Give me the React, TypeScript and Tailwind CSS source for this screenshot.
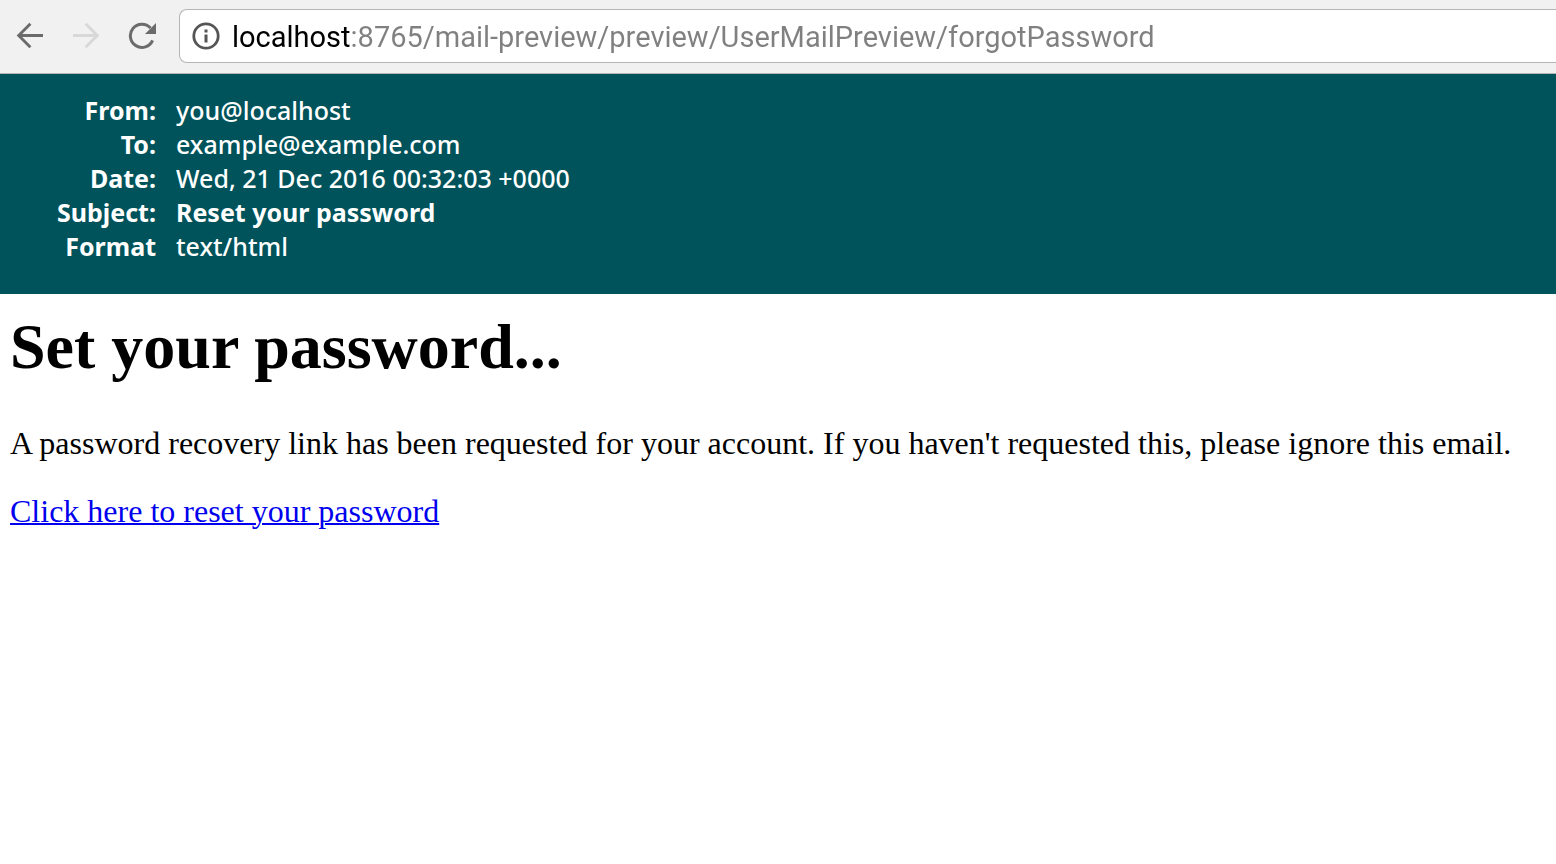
const headers = [
  { label: "From:", value: "you@localhost" },
  { label: "To:", value: "example@example.com" },
  { label: "Date:", value: "Wed, 21 Dec 2016 00:32:03 +0000" },
  { label: "Subject:", value: "Reset your password", strong: true },
  { label: "Format", value: "text/html" },
];

function BackIcon() {
  return (
    <svg className="size-7" viewBox="0 0 28 28" fill="none" stroke="currentColor" strokeWidth="2.9" aria-hidden="true">
      <path d="M27 13.5H3M14.4 1.7L2.7 13.5L14.4 25.3" />
    </svg>
  );
}

function ForwardIcon() {
  return (
    <svg className="size-7" viewBox="0 0 28 28" fill="none" stroke="currentColor" strokeWidth="2.9" aria-hidden="true">
      <path d="M1 13.5H25M13.6 1.7L25.3 13.5L13.6 25.3" />
    </svg>
  );
}

function ReloadIcon() {
  return (
    <svg className="size-7" viewBox="0 0 28 28" fill="none" aria-hidden="true">
      <path d="M22.5 5.9A11.6 11.6 0 1 0 24.6 18.4" stroke="currentColor" strokeWidth="3" />
      <path d="M28 1V12H17Z" fill="currentColor" />
    </svg>
  );
}

function InfoIcon() {
  return (
    <svg className="size-7 shrink-0 text-[#555555]" viewBox="0 0 28 28" fill="none" aria-hidden="true">
      <circle cx="14" cy="14" r="12.2" stroke="currentColor" strokeWidth="2.8" />
      <path d="M12.5 7.5h3v3h-3zM12.5 12.5h3v8h-3z" fill="currentColor" />
    </svg>
  );
}

function Toolbar() {
  return (
    <nav aria-label="Browser" className="flex items-center border-b border-[#b5b5b5] bg-[#f1f1f1] pt-[9px] pb-2.5 pl-4 text-[#6b6b6b]">
      <div className="flex gap-7">
        <button type="button" aria-label="Back"><BackIcon /></button>
        <button type="button" aria-label="Forward" disabled className="text-[#d8d8d8]"><ForwardIcon /></button>
        <button type="button" aria-label="Reload"><ReloadIcon /></button>
      </div>
      <div className="ml-[23px] flex h-[54px] flex-1 items-center gap-3 rounded-l-lg border border-r-0 border-[#b5b5b5] bg-white pl-3">
        <InfoIcon />
        <input
          type="text"
          aria-label="Address"
          spellCheck={false}
          defaultValue="localhost:8765/mail-preview/preview/UserMailPreview/forgotPassword"
          className="h-full min-w-0 flex-1 bg-[linear-gradient(90deg,#000000_118px,#808080_118px)] bg-clip-text pt-0.5 font-['Roboto','Liberation_Sans',sans-serif] text-[29px] text-transparent caret-black outline-none"
        />
      </div>
    </nav>
  );
}

export default function App() {
  return (
    <div className="min-h-screen bg-white text-black">
      <Toolbar />
      <header className="bg-[#00535b] px-5 pt-[19px] pb-[31px] font-['Noto_Sans','Open_Sans',sans-serif] text-[25px] leading-[34px] text-white">
        <dl className="grid grid-cols-[136px_1fr] gap-x-5">
          {headers.map(({ label, value, strong }) => (
            <div key={label} className="contents">
              <dt className="text-right font-bold">{label}</dt>
              <dd className={strong ? "font-bold" : "font-medium"}>{value}</dd>
            </div>
          ))}
        </dl>
      </header>
      <main className="px-2.5 pt-4 font-['Liberation_Serif','Times_New_Roman',serif] text-[32px] leading-9">
        <h1 className="text-[64px] leading-[74px] font-bold">Set your password...</h1>
        <p className="mt-[41px]">
          A password recovery link has been requested for your account. If you haven't requested this, please ignore this email.
        </p>
        <p className="mt-8">
          <a href="#reset" className="text-[#0000ee] underline decoration-2">Click here to reset your password</a>
        </p>
      </main>
    </div>
  );
}
